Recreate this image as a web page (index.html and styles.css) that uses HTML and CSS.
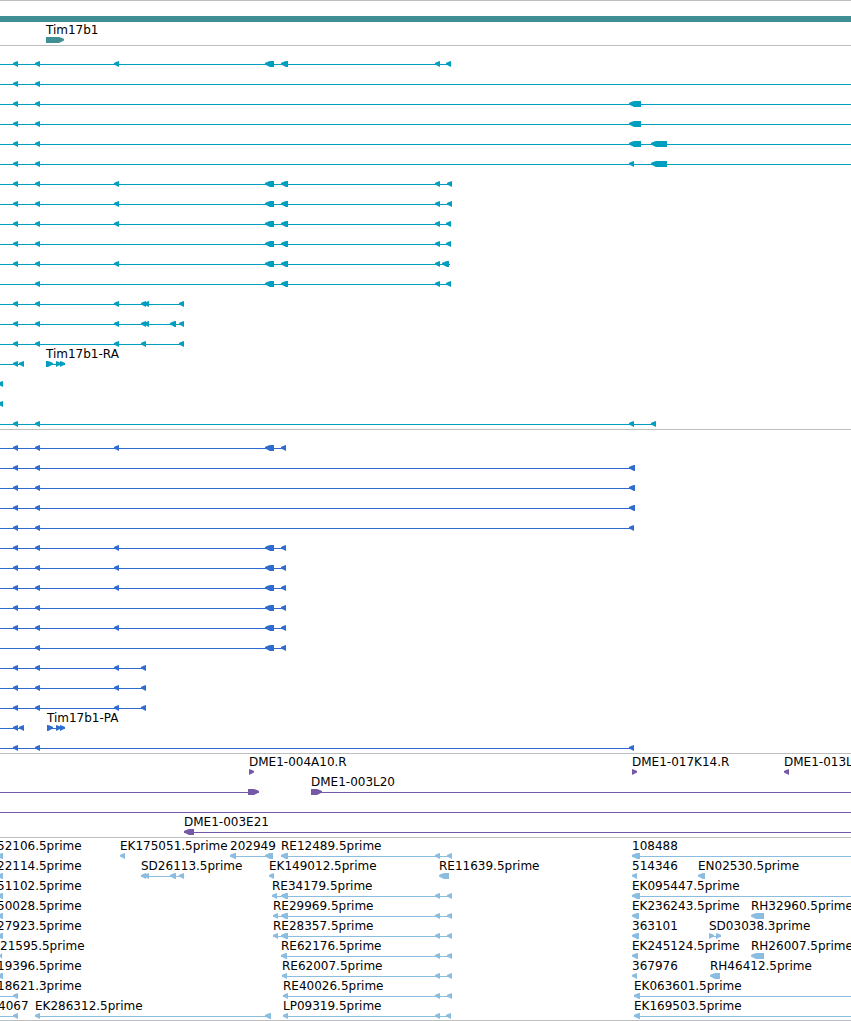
FILE: index.html
```html
<!DOCTYPE html>
<html lang="en">
<head>
  <meta charset="UTF-8">
  <title>Tim17b1</title>
  <link rel="stylesheet" href="styles.css">
</head>
<body>

<main class="browser">
  <section class="track genes" id="genes"></section>
  <section class="track transcripts" id="transcripts"></section>
  <section class="track proteins" id="proteins"></section>
  <section class="track bac" id="bac"></section>
  <section class="track est" id="est"></section>
</main>

<script>
  const SVG = "http://www.w3.org/2000/svg";
  const HEAD = 5;

  // exons shared by many of the spliced features
  const A = [[13, 18], [35, 40]];
  const B = [...A, [114, 119]];
  const C = [[265, 274], [281, 288], [435, 440]];
  const P = [[265, 274], [281, 286]];
  const END = [[435, 440], [447, 452]];

  // feature: from, to ("100%" runs off the view), exons, label, strand
  function left(from, to, exons, label) {
    return { from, to, exons, label, strand: -1 };
  }
  function right(from, to, exons, label) {
    return { from, to, exons, label, strand: 1 };
  }
  function single(from, to, label) {
    return left(from, to, [[from, to]], label);
  }

  const tracks = {
    genes: [
      [{ bar: true }],
      [right(46, 64, [[46, 64]], "Tim17b1")]
    ],
    transcripts: [
      [left(0, 451, [...B, ...C, [446, 451]])],
      [left(0, "100%", A)],
      [left(0, "100%", [...A, [629, 641]])],
      [left(0, "100%", [...A, [629, 641]])],
      [left(0, "100%", [...A, [629, 641], [651, 667]])],
      [left(0, "100%", [...A, [629, 634], [651, 667]])],
      [left(0, 452, [...B, ...C, [447, 452]])],
      [left(0, 452, [...B, ...C, [447, 452]])],
      [left(0, 451, [...B, ...C, [446, 451]])],
      [left(0, 451, [...A, ...C, [446, 451]])],
      [left(0, 450, [...B, ...C, [442, 449]])],
      [left(0, 451, [[35, 40], ...C, [446, 451]])],
      [left(0, 184, [...B, [141, 146], [144, 149], [179, 184]])],
      [left(0, 184, [...B, [141, 146], [144, 149], [170, 176], [179, 184]])],
      [left(0, 184, [...B, [141, 146], [179, 184]])],
      [left(0, 24, [[13, 18], [19, 24]]), right(46, 65, [[46, 53], [56, 61], [60, 65]], "Tim17b1-RA")],
      [single(-2, 3)],
      [single(-2, 3)],
      [left(0, 656, [...A, [629, 634], [651, 656]])]
    ],
    proteins: [
      [left(0, 286, [...B, ...P])],
      [left(0, 635, [...A, [629, 635]])],
      [left(0, 635, [...A, [629, 635]])],
      [left(0, 635, [...A, [629, 635]])],
      [left(0, 634, [...A, [629, 634]])],
      [left(0, 286, [...B, ...P])],
      [left(0, 286, [...B, ...P])],
      [left(0, 286, [...B, ...P])],
      [left(0, 286, [...A, ...P])],
      [left(0, 286, [...B, ...P])],
      [left(0, 286, [[35, 40], ...P])],
      [left(0, 146, [...B, [141, 146]])],
      [left(0, 146, [...B, [141, 146]])],
      [left(0, 146, [...B, [141, 146]])],
      [left(0, 24, [[13, 18], [19, 24]]), right(47, 65, [[47, 53], [56, 61], [60, 65]], "Tim17b1-PA")],
      [left(0, 634, [...A, [629, 634]])]
    ],
    bac: [
      [
        right(249, 254, [[249, 254]], "DME1-004A10.R"),
        right(632, 637, [[632, 637]], "DME1-017K14.R"),
        single(784, 789, "DME1-013L")
      ],
      [right(0, 259, [[248, 259]]), right(311, "100%", [[311, 322]], "DME1-003L20")],
      [left(0, "100%", [])],
      [left(184, "100%", [[184, 194]], "DME1-003E21")]
    ],
    est: [
      [
        single(-3, 3, "52106.5prime"),
        single(120, 125, "EK175051.5prime"),
        left(230, 273, [[230, 236], [265, 273]], "202949"),
        left(281, 452, [[281, 288], ...END], "RE12489.5prime"),
        left(632, "100%", [[632, 640]], "108488")
      ],
      [
        single(-3, 3, "22114.5prime"),
        left(141, 184, [[141, 146], [144, 149], [170, 176], [179, 184]], "SD26113.5prime"),
        single(269, 274, "EK149012.5prime"),
        single(439, 449, "RE11639.5prime"),
        single(632, 637, "514346"),
        single(698, 705, "EN02530.5prime")
      ],
      [
        single(-3, 3, "51102.5prime"),
        left(272, 452, [[272, 277], [281, 288], ...END], "RE34179.5prime"),
        left(632, "100%", [[632, 640]], "EK095447.5prime")
      ],
      [
        single(-3, 3, "50028.5prime"),
        left(273, 452, [[273, 278], [281, 288], ...END], "RE29969.5prime"),
        single(632, 639, "EK236243.5prime"),
        single(751, 764, "RH32960.5prime")
      ],
      [
        single(-3, 3, "27923.5prime"),
        left(273, 452, [[273, 278], [281, 288], ...END], "RE28357.5prime"),
        single(632, 639, "363101"),
        right(709, 721, [[709, 714], [716, 721]], "SD03038.3prime")
      ],
      [
        single(0, 2, "21595.5prime"),
        left(281, 452, [[281, 287], ...END], "RE62176.5prime"),
        single(632, 638, "EK245124.5prime"),
        single(751, 764, "RH26007.5prime")
      ],
      [
        single(-3, 3, "19396.5prime"),
        left(282, 452, [[282, 287], ...END], "RE62007.5prime"),
        single(632, 637, "367976"),
        single(710, 720, "RH46412.5prime")
      ],
      [
        left(-3, 18, [[13, 18]], "18621.3prime"),
        left(283, 452, [[283, 288], ...END], "RE40026.5prime"),
        left(634, "100%", [[634, 640]], "EK063601.5prime")
      ],
      [
        left(-2, 18, [[13, 18]], "4067"),
        left(35, 271, [[35, 40], [265, 271]], "EK286312.5prime"),
        left(283, 451, [[283, 288], [435, 440], [446, 451]], "LP09319.5prime"),
        left(634, "100%", [[634, 640]], "EK169503.5prime")
      ]
    ]
  };

  function add(parent, name, attrs) {
    const el = document.createElementNS(SVG, name);
    for (const key in attrs) {
      el.setAttribute(key, attrs[key]);
    }
    parent.appendChild(el);
    return el;
  }

  // block with a slightly rounded arrow head on the strand side
  function drawExon(svg, start, end, strand) {
    const head = Math.min(HEAD, end - start);
    const tip = strand < 0 ? start : end;
    const back = strand < 0 ? end : start;
    const neck = tip - strand * head;
    const mid = tip - strand * head * 0.4;
    add(svg, "polygon", {
      points: `${tip},16 ${mid},15 ${neck},14 ${back},14 ${back},20 ${neck},20 ${mid},18.5 ${tip},17.5`
    });
  }

  function drawFeature(svg, f) {
    if (f.bar) {
      add(svg, "rect", { x: 0, y: 13, width: "100%", height: 6 });
      return;
    }
    if (f.exons.length !== 1 || f.exons[0][0] !== f.from || f.exons[0][1] !== f.to) {
      add(svg, "line", { x1: f.from, x2: f.to, y1: 17.5, y2: 17.5 });
    }
    f.exons.forEach(([start, end]) => drawExon(svg, start, end, f.strand));
    if (f.label) {
      add(svg, "text", { x: f.from, y: 11 }).textContent = f.label;
    }
  }

  for (const id in tracks) {
    const section = document.getElementById(id);
    tracks[id].forEach(features => {
      const svg = add(section, "svg", { class: "row" });
      features.forEach(f => drawFeature(svg, f));
    });
  }
</script>

</body>
</html>
```
FILE: styles.css
```css
body {
  margin: 0;
  background: white;
  font-family: "DejaVu Sans", Verdana, sans-serif;
  font-size: 12px;
}
.browser {
  border-bottom: 1px solid #bebebe;
  overflow: hidden;
}
.track {
  border-top: 1px solid #bebebe;
  padding: 1px 0 2px;
}
.row {
  display: block;
  width: 100%;
  height: 20px;
  fill: currentColor;
  stroke: none;
  overflow: hidden;
}
.row line {
  stroke: currentColor;
  stroke-width: 1px;
}
.row text {
  fill: black;
}
.genes {
  color: #408f94;
  padding-top: 2px;
}
.transcripts {
  color: #009ebf;
}
.proteins {
  color: #306ccf;
}
.bac {
  color: #7558a6;
}
.est {
  color: #8abddf;
  padding-bottom: 1px;
}
```
